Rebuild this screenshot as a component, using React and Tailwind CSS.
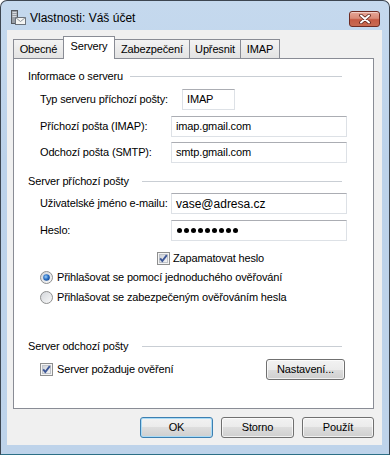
import React from 'react';

const TitleIcon = () => (
    <svg width="16" height="16" viewBox="0 0 16 16">
        <rect x="1.5" y="0.5" width="6" height="13" fill="#9a9fa6" stroke="#55595f" />
        <rect x="2.5" y="2" width="4" height="1" fill="#d7dadf" />
        <rect x="2.5" y="4" width="4" height="1" fill="#d7dadf" />
        <rect x="2.5" y="6" width="4" height="1" fill="#d7dadf" />
        <rect x="5.5" y="7.5" width="10" height="7" fill="#f4f4f2" stroke="#6c737c" />
        <path d="M5.5 7.5 L10.5 11.5 L15.5 7.5" fill="none" stroke="#8d949c" />
    </svg>
);

const CloseButton = () => (
    <div className="w-[31px] h-[16px] rounded-[3px] border border-[#6e2b22] bg-[linear-gradient(to_bottom,#e6a596_0%,#d98b78_45%,#c55a43_55%,#c86b52_100%)] shadow-[inset_0_1px_0_rgba(255,255,255,0.45)] flex items-center justify-center">
        <svg width="12" height="10" viewBox="0 0 12 10">
            <path d="M2 1.5 L10 8.5 M10 1.5 L2 8.5" stroke="#5a2118" strokeWidth="3.6" strokeLinecap="round" />
            <path d="M2 1.5 L10 8.5 M10 1.5 L2 8.5" stroke="#ffffff" strokeWidth="2" strokeLinecap="round" />
        </svg>
    </div>
);

const Checkbox = ({ checked }) => (
    <svg width="13" height="13" viewBox="0 0 13 13" className="shrink-0">
        <defs>
            <linearGradient id="cbfill" x1="0" y1="0" x2="1" y2="1">
                <stop offset="0" stopColor="#cbcfd5" />
                <stop offset="1" stopColor="#f7f7f7" />
            </linearGradient>
        </defs>
        <rect x="0.5" y="0.5" width="12" height="12" fill="#f4f4f4" stroke="#8e8f8f" />
        <rect x="2.5" y="2.5" width="8" height="8" fill="url(#cbfill)" stroke="#bfc3c9" />
        {checked && (
            <path d="M3.2 6.4 L5.3 9 L9.8 3.2" fill="none" stroke="#3d5797" strokeWidth="1.9" />
        )}
    </svg>
);

const Radio = ({ checked }) => (
    <svg width="13" height="13" viewBox="0 0 13 13" className="shrink-0">
        <defs>
            <linearGradient id="rdfill" x1="0" y1="0" x2="1" y2="1">
                <stop offset="0" stopColor="#d2d5da" />
                <stop offset="1" stopColor="#fafafa" />
            </linearGradient>
            <radialGradient id="rddot" cx="0.4" cy="0.4" r="0.6">
                <stop offset="0" stopColor="#9fd0f7" />
                <stop offset="0.6" stopColor="#2d73c8" />
                <stop offset="1" stopColor="#1a4f98" />
            </radialGradient>
        </defs>
        <circle cx="6.5" cy="6.5" r="6" fill="url(#rdfill)" stroke="#8e8f8f" />
        {checked && <circle cx="6.5" cy="6.5" r="3.3" fill="url(#rddot)" />}
    </svg>
);

const WinButton = ({ children, isDefault, className = "" }) => (
    <div className={
        "h-[21px] rounded-[3px] border flex items-center justify-center text-[11px] text-black " +
        "bg-[linear-gradient(to_bottom,#f2f2f2_0%,#ebebeb_50%,#dddddd_50%,#cfcfcf_100%)] " +
        (isDefault
            ? "border-[#3c7fb1] shadow-[inset_0_0_0_1px_#a9dbf6] "
            : "border-[#707070] shadow-[inset_0_0_0_1px_rgba(255,255,255,0.7)] ") +
        className
    }>
        {children}
    </div>
);

const TextBox = ({ children, className = "w-[176px]" }) => (
    <div className={
        "h-[21px] bg-white border border-[#dde1e6] border-t-[#abadb3] flex items-center pl-[4px] text-[11px] text-black whitespace-nowrap " +
        className
    }>
        {children}
    </div>
);

const GroupHeading = ({ label, labelWidth, lineWidth, className = "" }) => (
    <div className={"flex items-center h-[16px] pl-[14px] " + className}>
        <div className={"text-[11px] text-black whitespace-nowrap " + labelWidth}>{label}</div>
        <div className={"h-px bg-[#c9ced4] " + lineWidth} />
    </div>
);

const FieldRow = ({ label, children, className = "" }) => (
    <div className={"flex items-center pl-[26px] " + className}>
        <div className="w-[131px] shrink-0 text-[11px] text-black whitespace-nowrap">{label}</div>
        {children}
    </div>
);

const tabs = ["Obecné", "Servery", "Zabezpečení", "Upřesnit", "IMAP"];
const tabWidths = ["w-[51px]", "w-[52px]", "w-[76px]", "w-[52px]", "w-[40px]"];

export default function App() {
    return (
        <div className="w-[390px] h-[455px] flex flex-col rounded-t-[7px] border border-[#3d4651] border-b-[#2c6f86] bg-[linear-gradient(to_bottom,#c5d9ee_0%,#bcd2ea_35%,#bed3ea_100%)] font-['Liberation_Sans',Arial,sans-serif] tracking-[-0.15px] overflow-hidden">
            {/* Title bar */}
            <div className="h-[29px] flex items-start shrink-0">
                <div className="flex items-center h-[28px] pt-[5px] pl-[9px] gap-[4px]">
                    <TitleIcon />
                    <span className="text-[12px] text-black tracking-normal">Vlastnosti: Váš účet</span>
                </div>
                <div className="ml-auto mt-[10px] mr-[9px]">
                    <CloseButton />
                </div>
            </div>

            {/* Client area */}
            <div className="ml-[6px] w-[375px] h-[415px] bg-[#f0f0f0] flex flex-col shrink-0">
                {/* Tabs */}
                <div className="h-[28px] pl-[6px] flex items-end shrink-0">
                    {tabs.map((t, i) => {
                        const selected = i === 1;
                        return (
                            <div
                                key={t}
                                className={
                                    (i > 0 ? "-ml-px " : "") +
                                    tabWidths[i] + " " +
                                    (selected
                                        ? "relative z-10 -mb-px h-[23px] bg-white border border-b-0 border-[#898c95] flex items-center justify-center pb-[3px] text-[11px] text-black"
                                        : "h-[19px] border border-b-0 border-[#898c95] bg-[linear-gradient(to_bottom,#f3f3f3,#e3e3e3)] flex items-center justify-center text-[11px] text-black")
                                }
                            >
                                {t}
                            </div>
                        );
                    })}
                </div>

                {/* Tab panel */}
                <div className="w-[361px] h-[351px] ml-[6px] bg-white border border-[#898c95] flex flex-col shrink-0">
                    <GroupHeading label="Informace o serveru" labelWidth="w-[102px]" lineWidth="w-[212px]" className="mt-[9px]" />

                    <FieldRow label="Typ serveru příchozí pošty:" className="mt-[5px]">
                        <TextBox className="w-[53px] ml-[11px]">IMAP</TextBox>
                    </FieldRow>
                    <FieldRow label="Příchozí pošta (IMAP):" className="mt-[6px]">
                        <TextBox>imap.gmail.com</TextBox>
                    </FieldRow>
                    <FieldRow label="Odchozí pošta (SMTP):" className="mt-[5px]">
                        <TextBox>smtp.gmail.com</TextBox>
                    </FieldRow>

                    <GroupHeading label="Server příchozí pošty" labelWidth="w-[114px]" lineWidth="w-[200px]" className="mt-[10px]" />

                    <FieldRow label="Uživatelské jméno e-mailu:" className="mt-[4px]">
                        <TextBox><span className="text-[12px] tracking-normal">vase@adresa.cz</span></TextBox>
                    </FieldRow>
                    <FieldRow label="Heslo:" className="mt-[6px]">
                        <TextBox>
                            <span className="flex gap-[2px] pl-[1px]" aria-label="heslo">
                                {Array.from({ length: 9 }).map((_, i) => (
                                    <span key={i} className="w-[5px] h-[5px] rounded-full bg-black" />
                                ))}
                            </span>
                        </TextBox>
                    </FieldRow>

                    <div className="flex items-center h-[16px] mt-[9px] pl-[143px] gap-[3px]">
                        <Checkbox checked />
                        <span className="text-[11px] text-black whitespace-nowrap">Zapamatovat heslo</span>
                    </div>

                    <div className="flex items-center h-[16px] mt-[3px] pl-[26px] gap-[4px]">
                        <Radio checked />
                        <span className="text-[11px] text-black whitespace-nowrap">Přihlašovat se pomocí jednoduchého ověřování</span>
                    </div>
                    <div className="flex items-center h-[16px] mt-[4px] pl-[26px] gap-[4px]">
                        <Radio />
                        <span className="text-[11px] text-black whitespace-nowrap">Přihlašovat se zabezpečeným ověřováním hesla</span>
                    </div>

                    <GroupHeading label="Server odchozí pošty" labelWidth="w-[114px]" lineWidth="w-[200px]" className="mt-[33px]" />

                    <div className="flex items-center justify-between ml-[26px] w-[305px] h-[21px] mt-[5px]">
                        <div className="flex items-center gap-[4px]">
                            <Checkbox checked />
                            <span className="text-[11px] text-black whitespace-nowrap">Server požaduje ověření</span>
                        </div>
                        <WinButton className="w-[79px]">Nastavení...</WinButton>
                    </div>
                </div>

                {/* Dialog buttons */}
                <div className="flex justify-end gap-[8px] pr-[8px] mt-[8px]">
                    <WinButton isDefault className="w-[73px]">OK</WinButton>
                    <WinButton className="w-[73px]">Storno</WinButton>
                    <WinButton className="w-[72px]">Použít</WinButton>
                </div>
            </div>
        </div>
    );
}
